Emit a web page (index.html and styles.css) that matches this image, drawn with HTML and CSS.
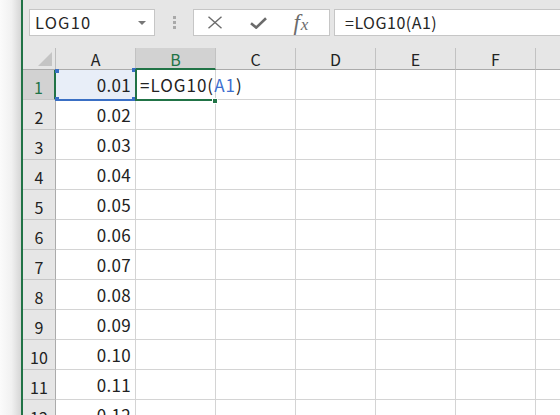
FILE: index.html
```html
<!DOCTYPE html>
<html lang="ja">
<head>
<meta charset="utf-8">
<link rel="stylesheet" href="styles.css">
</head>
<body>
<div class="window">
  <div class="shadow"></div>
  <div class="main">
    <div class="formula-bar">
      <div class="name-box">
        <span class="name-text">LOG10</span>
        <span class="dropdown"></span>
      </div>
      <div class="grip"><i></i><i></i><i></i></div>
      <div class="btn-group">
        <span class="btn">
          <svg width="16" height="13" viewBox="0 0 16 13"><path d="M1.5 0.8 L14.5 12.2 M14.5 0.8 L1.5 12.2" stroke="#6b6b6b" stroke-width="1.4" fill="none"/></svg>
        </span>
        <span class="btn check">
          <svg width="17" height="12" viewBox="0 0 17 12"><path d="M1 6.2 L6.2 10.6 L16 1.2" stroke="#6b6b6b" stroke-width="2.6" fill="none"/></svg>
        </span>
        <span class="btn fx"><i>f</i><i class="x">x</i></span>
      </div>
      <div class="formula-input">=LOG10(A1)</div>
    </div>
    <div class="sheet">
      <div class="corner"><span class="tri"></span></div>
      <div class="colhead">A</div>
      <div class="colhead sel">B</div>
      <div class="colhead">C</div>
      <div class="colhead">D</div>
      <div class="colhead">E</div>
      <div class="colhead">F</div>
      <div class="colhead last"></div>

      <div class="rowhead sel">1</div>
      <div class="cell num ref">0.01<span class="ref-box"><b class="tl"></b><b class="tr"></b><b class="bl"></b><b class="br"></b></span></div>
      <div class="cell active"><span class="ftext">=LOG10(<span class="refc">A1</span>)</span><span class="active-box"></span><span class="handle"></span></div>
      <div class="cell"></div><div class="cell"></div><div class="cell"></div><div class="cell"></div><div class="cell last"></div>

      <div class="rowhead">2</div><div class="cell num">0.02</div><div class="cell"></div><div class="cell"></div><div class="cell"></div><div class="cell"></div><div class="cell"></div><div class="cell last"></div>
      <div class="rowhead">3</div><div class="cell num">0.03</div><div class="cell"></div><div class="cell"></div><div class="cell"></div><div class="cell"></div><div class="cell"></div><div class="cell last"></div>
      <div class="rowhead">4</div><div class="cell num">0.04</div><div class="cell"></div><div class="cell"></div><div class="cell"></div><div class="cell"></div><div class="cell"></div><div class="cell last"></div>
      <div class="rowhead">5</div><div class="cell num">0.05</div><div class="cell"></div><div class="cell"></div><div class="cell"></div><div class="cell"></div><div class="cell"></div><div class="cell last"></div>
      <div class="rowhead">6</div><div class="cell num">0.06</div><div class="cell"></div><div class="cell"></div><div class="cell"></div><div class="cell"></div><div class="cell"></div><div class="cell last"></div>
      <div class="rowhead">7</div><div class="cell num">0.07</div><div class="cell"></div><div class="cell"></div><div class="cell"></div><div class="cell"></div><div class="cell"></div><div class="cell last"></div>
      <div class="rowhead">8</div><div class="cell num">0.08</div><div class="cell"></div><div class="cell"></div><div class="cell"></div><div class="cell"></div><div class="cell"></div><div class="cell last"></div>
      <div class="rowhead">9</div><div class="cell num">0.09</div><div class="cell"></div><div class="cell"></div><div class="cell"></div><div class="cell"></div><div class="cell"></div><div class="cell last"></div>
      <div class="rowhead">10</div><div class="cell num">0.10</div><div class="cell"></div><div class="cell"></div><div class="cell"></div><div class="cell"></div><div class="cell"></div><div class="cell last"></div>
      <div class="rowhead">11</div><div class="cell num">0.11</div><div class="cell"></div><div class="cell"></div><div class="cell"></div><div class="cell"></div><div class="cell"></div><div class="cell last"></div>
      <div class="rowhead">12</div><div class="cell num">0.12</div><div class="cell"></div><div class="cell"></div><div class="cell"></div><div class="cell"></div><div class="cell"></div><div class="cell last"></div>
    </div>
  </div>
</div>
</body>
</html>
```
FILE: styles.css
```css
* { box-sizing: border-box; }
html, body { margin: 0; padding: 0; }
body {
  width: 560px;
  height: 415px;
  overflow: hidden;
  background: #ffffff;
  font-family: "Noto Sans CJK JP", "Noto Sans", sans-serif;
  color: #222;
}
.window {
  display: flex;
  width: 560px;
  height: 415px;
}
.shadow {
  width: 21px;
  flex: none;
  background: linear-gradient(to right, #fbfbfb 0%, #f1f1f1 55%, #d6d6d6 100%);
}
.main {
  flex: 1;
  min-width: 0;
  border-left: 2px solid #217346;
  display: flex;
  flex-direction: column;
  overflow: hidden;
}
.formula-bar {
  height: 48px;
  flex: none;
  background: #e6e6e6;
  display: flex;
  align-items: flex-start;
  padding-top: 9px;
}
.name-box {
  margin-left: 6px;
  width: 126px;
  height: 27px;
  background: #fff;
  border: 1px solid #c6c6c6;
  display: flex;
  align-items: center;
  padding-left: 5px;
  padding-right: 8px;
}
.name-text {
  flex: 1;
  font-size: 16.5px;
  letter-spacing: 1.2px;
  color: #262626;
  line-height: 1;
}
.dropdown {
  width: 0; height: 0;
  border-left: 4px solid transparent;
  border-right: 4px solid transparent;
  border-top: 4px solid #777;
}
.grip {
  width: 38px;
  height: 27px;
  display: flex;
  flex-direction: column;
  align-items: center;
  justify-content: center;
  gap: 2px;
}
.grip i {
  display: block;
  width: 3px;
  height: 3px;
  background: #a9a9a9;
}
.btn-group {
  width: 137px;
  height: 27px;
  background: #fff;
  border: 1px solid #c6c6c6;
  display: flex;
  align-items: center;
  padding-left: 13px;
}
.btn {
  width: 46px;
  display: flex;
  align-items: center;
}
.btn.check { padding-left: 2px; width: 44px; }
.btn.fx {
  font-family: "Liberation Serif", "DejaVu Serif", serif;
  font-size: 23px;
  color: #6b6b6b;
  padding-left: 6px;
  line-height: 1;
}
.btn.fx i { font-style: italic; }
.btn.fx .x { font-size: 17px; margin-left: 1px; position: relative; top: 2px; }
.formula-input {
  margin-left: 4px;
  flex: 1;
  height: 27px;
  background: #fff;
  border: 1px solid #c6c6c6;
  border-right: none;
  padding-left: 10px;
  font-size: 16px;
  letter-spacing: 0.5px;
  line-height: 25px;
  color: #262626;
}
.sheet {
  flex: 1;
  display: grid;
  grid-template-columns: 33px repeat(6, 80px) 1fr;
  grid-template-rows: 22px;
  grid-auto-rows: 30px;
  background: #fff;
}
.corner {
  background: #e6e6e6;
  border-right: 1px solid #bdbdbd;
  border-bottom: 1px solid #ababab;
  position: relative;
}
.tri {
  position: absolute;
  right: 3px;
  bottom: 3px;
  width: 0; height: 0;
  border-left: 14px solid transparent;
  border-bottom: 14px solid #c4c4c4;
}
.colhead {
  background: #e6e6e6;
  border-right: 1px solid #c2c2c2;
  border-bottom: 1px solid #ababab;
  font-size: 16px;
  text-align: center;
  line-height: 21px;
  color: #222;
  padding-top: 1px;
}
.colhead.sel {
  background: #d2d2d2;
  color: #217346;
  border-bottom: 2px solid #217346;
}
.colhead.last { border-right: none; }
.rowhead {
  background: #e6e6e6;
  border-right: 1px solid #ababab;
  border-bottom: 1px solid #c6c6c6;
  font-size: 16px;
  display: flex;
  align-items: flex-end;
  justify-content: center;
  padding-bottom: 1px;
  line-height: 22px;
  color: #222;
}
.rowhead.sel {
  background: #d2d2d2;
  color: #217346;
  border-right: 2px solid #217346;
}
.cell {
  border-right: 1px solid #d4d4d4;
  border-bottom: 1px solid #d4d4d4;
  position: relative;
  font-size: 17px;
  line-height: 22px;
  display: flex;
  align-items: flex-end;
  padding-bottom: 3px;
  white-space: nowrap;
}
.cell.last { border-right: none; }
.cell.num {
  justify-content: flex-end;
  padding-right: 4px;
  letter-spacing: 0.3px;
  color: #222;
}
.cell.ref { background: #e8eef8; }
.ref-box {
  position: absolute;
  left: -1px;
  top: -1px;
  right: -1px;
  bottom: -2px;
  border-bottom: 2px solid #3a6fc4;
  pointer-events: none;
}
.ref-box b {
  position: absolute;
  width: 4px;
  height: 4px;
  background: #3a6fc4;
}
.ref-box .tl { left: 0; top: 0; }
.ref-box .tr { right: 0; top: -1px; }
.ref-box .bl { left: 0; bottom: -2px; }
.ref-box .br { right: 0; bottom: -2px; }
.cell.active { z-index: 2; padding-left: 4px; }
.ftext { letter-spacing: 1px; color: #222; }
.refc { color: #3d6fd0; }
.active-box {
  position: absolute;
  left: -1px;
  top: -1px;
  width: 78px;
  height: 32px;
  border-left: 2px solid #217346;
  border-bottom: 2px solid #217346;
  pointer-events: none;
}
.handle {
  position: absolute;
  left: 76px;
  top: 28px;
  width: 6px;
  height: 6px;
  background: #217346;
  border: 1px solid #fff;
}
```
